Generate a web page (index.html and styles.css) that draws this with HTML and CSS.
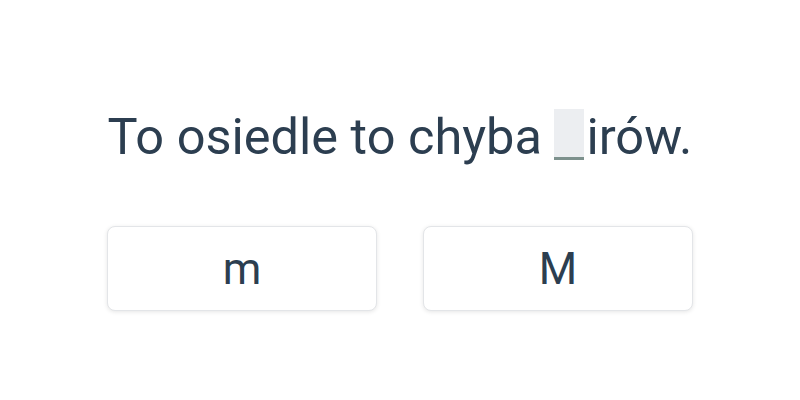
FILE: index.html
```html
<!DOCTYPE html>
<html lang="pl">
<head>
    <meta charset="UTF-8">
    <meta name="viewport" content="width=device-width, initial-scale=1.0">
    <title>Quiz</title>
    <link rel="stylesheet" href="styles.css">
</head>
<body>
    <div class="quiz">
        <p class="sentence">To osiedle to chyba <span class="blank">_</span>irów.</p>
        <div class="choices">
            <button class="choice">m</button>
            <button class="choice">M</button>
        </div>
    </div>
</body>
</html>
```

FILE: styles.css
```css
* {
    margin: 0;
    padding: 0;
    box-sizing: border-box;
}

html, body {
    width: 100%;
    height: 100%;
    background: #fff;
}

body {
    font-family: Roboto, "Liberation Sans", sans-serif;
    color: #2c3e50;
    display: flex;
    justify-content: center;
}

.quiz {
    width: 586px;
    padding-top: 104px;
}

.sentence {
    text-align: center;
    font-size: 50.5px;
    line-height: 66px;
}

/* luka do uzupełnienia */
.blank {
    display: inline-block;
    width: 30px;
    height: 51px;
    vertical-align: -5px;
    background: #eceef1;
    border-bottom: 3px solid #7d918d;
    color: transparent;
    margin-right: 2px;
}

.choices {
    display: grid;
    grid-template-columns: 1fr 1fr;
    gap: 46px;
    margin-top: 56px;
}

.choice {
    height: 85px;
    background: #fff;
    border: 1px solid #e3e5e8;
    border-radius: 8px;
    box-shadow: 0 1px 4px rgba(0,0,0,0.1);
    font-family: inherit;
    font-size: 44px;
    color: #2c3e50;
    cursor: pointer;
}
```
